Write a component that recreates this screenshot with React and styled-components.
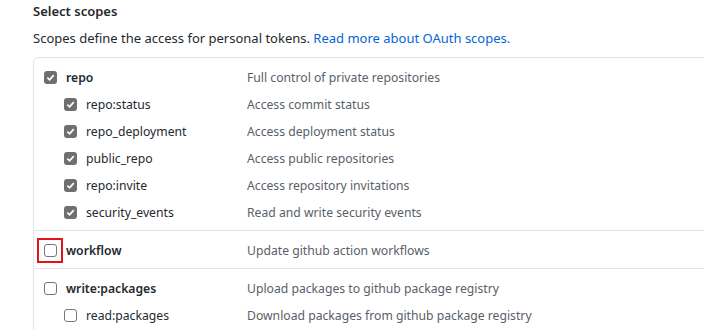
import React from "react";
import styled, { createGlobalStyle } from "styled-components";

const GlobalStyle = createGlobalStyle`
  body {
    margin: 0;
    background: #fff;
    overflow: hidden;
    font-family: "Segoe UI", "Noto Sans", "Open Sans", sans-serif;
    color: #24292e;
  }
`;

const Page = styled.div`
  padding-left: 33px;
`;

const Heading = styled.h3`
  margin: 0;
  font-size: 13px;
  font-weight: 600;
  line-height: 22px;
`;

const Note = styled.p`
  margin: 6px 0 0;
  font-size: 13px;
  line-height: 20px;
  a {
    color: #0366d6;
    text-decoration: none;
  }
`;

const Box = styled.div`
  margin-top: 9px;
  margin-right: -12px;
  border: 1px solid #e1e4e8;
  border-radius: 6px;
`;

const Group = styled.div`
  padding: 6px 0 4px;
  & + & {
    border-top: 1px solid #e1e4e8;
  }
`;

const Row = styled.label`
  display: grid;
  grid-template-columns: 213px 1fr;
  align-items: center;
  height: 27px;
  font-size: 12.2px;
`;

const Name = styled.span`
  display: flex;
  align-items: center;
  gap: 9px;
  padding-left: ${(p) => (p.$sub ? 30 : 10)}px;
  font-weight: ${(p) => (p.$sub ? 400 : 600)};
  color: #24292e;
`;

const Desc = styled.span`
  color: #586069;
`;

const Check = styled.span`
  position: relative;
  display: inline-flex;
  align-items: center;
  justify-content: center;
  width: 13px;
  height: 13px;
  box-sizing: border-box;
  border-radius: 3px;
  background: ${(p) => (p.$on ? "#6f6f6f" : "#fff")};
  border: ${(p) => (p.$on ? "none" : "1px solid #767676")};
  flex: none;
`;

const Highlight = styled.span`
  position: absolute;
  left: -8px;
  top: -7px;
  width: 26px;
  height: 25px;
  box-sizing: border-box;
  border: 2px solid #e3131b;
`;

const Tick = () => (
  <svg width="9" height="9" viewBox="0 0 10 10">
    <path d="M1.5 5.2 L4 7.6 L8.6 2.4" fill="none" stroke="#fff" strokeWidth="1.9" />
  </svg>
);

const groups = [
  [
    ["repo", "Full control of private repositories", true, false],
    ["repo:status", "Access commit status", true, true],
    ["repo_deployment", "Access deployment status", true, true],
    ["public_repo", "Access public repositories", true, true],
    ["repo:invite", "Access repository invitations", true, true],
    ["security_events", "Read and write security events", true, true],
  ],
  [["workflow", "Update github action workflows", false, false, true]],
  [
    ["write:packages", "Upload packages to github package registry", false, false],
    ["read:packages", "Download packages from github package registry", false, true],
  ],
];

export default function App() {
  return (
    <Page>
      <GlobalStyle />
      <Heading>Select scopes</Heading>
      <Note>
        Scopes define the access for personal tokens. <a href="#">Read more about OAuth scopes.</a>
      </Note>
      <Box>
        {groups.map((rows, i) => (
          <Group key={i}>
            {rows.map(([name, desc, on, sub, marked]) => (
              <Row key={name}>
                <Name $sub={sub}>
                  <Check $on={on}>
                    {on && <Tick />}
                    {marked && <Highlight />}
                  </Check>
                  {name}
                </Name>
                <Desc>{desc}</Desc>
              </Row>
            ))}
          </Group>
        ))}
      </Box>
    </Page>
  );
}
